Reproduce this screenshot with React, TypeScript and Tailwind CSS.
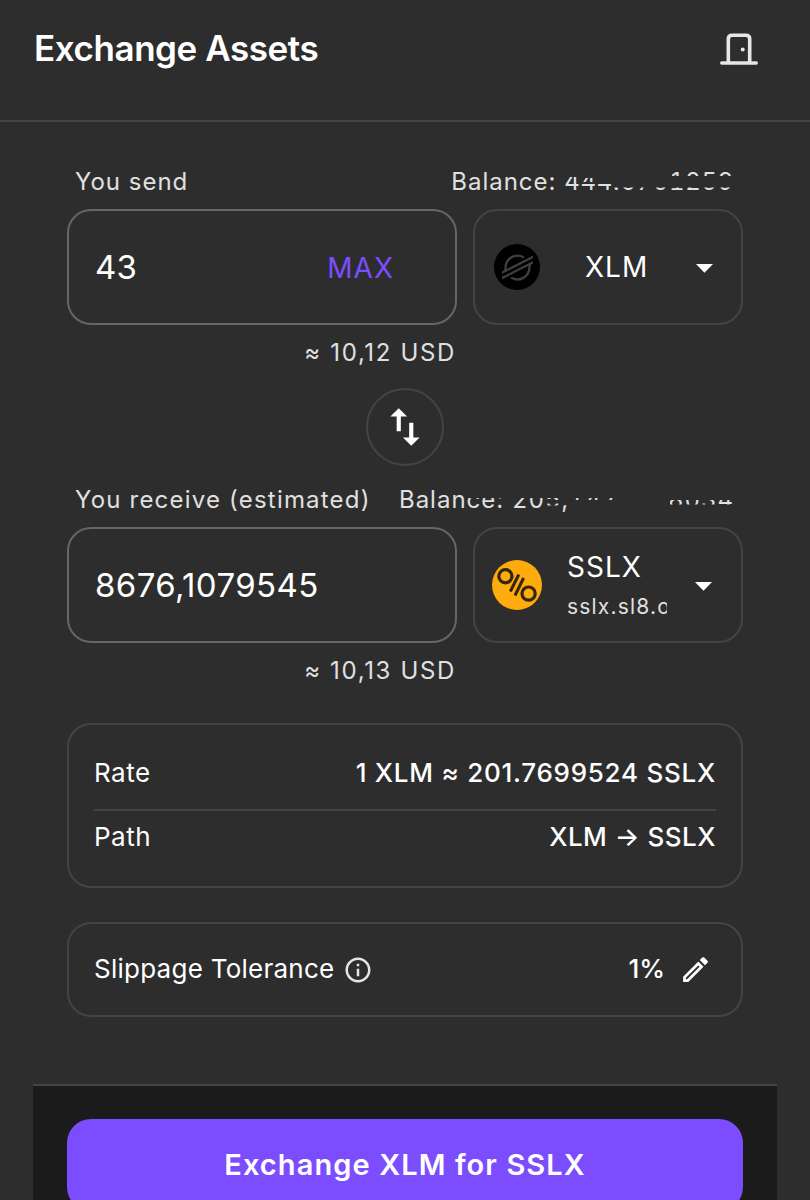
import type { ReactNode } from 'react';
import { MdArrowDropDown, MdImportExport, MdOutlineEdit, MdOutlineInfo } from 'react-icons/md';
import { SiStellar } from 'react-icons/si';

function DoorIcon() {
  return (
    <svg width="40" height="36" viewBox="0 0 40 36" fill="none" stroke="#e6e6e6" strokeWidth="3.6">
      <path d="M9.3 31V7Q9.3 3.3 13 3.3H27Q30.7 3.3 30.7 7V31" />
      <path d="M2.8 31H37.2" strokeLinecap="round" />
      <circle cx="23.7" cy="17.4" r="2" fill="#e6e6e6" stroke="none" />
    </svg>
  );
}

function PercentLogo() {
  return (
    <svg width="50" height="50" viewBox="0 0 50 50" fill="none" stroke="#33280f">
      <circle cx="25" cy="25" r="25" fill="#fdab0d" stroke="none" />
      <circle cx="13.4" cy="16.3" r="6.6" strokeWidth="3.2" />
      <circle cx="36.6" cy="33.6" r="6.6" strokeWidth="3.2" />
      <path d="M26.8 14.5L18.3 31.5M31.6 18L23 35.5" strokeWidth="3" />
    </svg>
  );
}

function Card({ className, children }: { className: string; children: ReactNode }) {
  return <div className={`rounded-[24px] border-2 border-[#444444] ${className}`}>{children}</div>;
}

export default function App() {
  return (
    <div className="flex h-[1200px] w-[810px] flex-col overflow-hidden whitespace-nowrap bg-[#2d2d2d] font-['Inter',sans-serif] text-white">
      <header className="flex h-[122px] shrink-0 items-start justify-between border-b-2 border-[#444444] pr-[51px] pl-[34px]">
        <h1 className="mt-[27px] text-[35px] leading-[42px] font-semibold tracking-[-0.43px]">Exchange Assets</h1>
        <div className="mt-[32px]"><DoorIcon /></div>
      </header>

      <main className="flex flex-col px-[67px]">
        <div className="mt-[44px] flex h-[32px] justify-between pr-[9px] pl-[8px] text-[24px] leading-[32px] tracking-[1px] text-[#e0e0e0]">
          <span>You send</span>
          <span className="relative">
            Balance: <span className="tracking-[0.7px] tabular-nums">444.6701259</span>
            <svg className="absolute top-px right-0" width="174" height="31" viewBox="0 0 174 31" fill="#2d2d2d">
              <path d="M0 0H22V10H0ZM22 0H38V11H22ZM22 15H38V17H22ZM38 0H55V17H38ZM55 0H112V20.5H55ZM112 9H174V20.5H112Z" />
            </svg>
          </span>
        </div>
        <div className="mt-[11px] flex gap-[16px]">
          <div className="flex h-[116px] w-[390px] items-center justify-between rounded-[24px] border-2 border-[#666666] pt-[2px] pr-[61px] pl-[26px]">
            <span className="text-[33px] tracking-[0.3px]">43</span>
            <span className="text-[28px] tracking-[1px] text-[#7c4dff]">MAX</span>
          </div>
          <Card className="flex h-[116px] w-[270px] items-center pl-[19px]">
            <span className="flex size-[46px] items-center justify-center rounded-full bg-black">
              <SiStellar size={31} className="text-[#3d3d3d]" />
            </span>
            <span className="ml-[45px] w-[99px] text-[28px] tracking-[1px]">XLM</span>
            <MdArrowDropDown size={41} />
          </Card>
        </div>
        <div className="mt-[12px] w-[389px] text-right text-[24px] leading-[32px] tracking-[1.65px] text-[#e0e0e0]">≈ 10,12 USD</div>
        <div className="mt-[19px] flex size-[78px] items-center justify-center self-center rounded-full border-2 border-[#444444]">
          <MdImportExport size={50} />
        </div>
        <div className="mt-[18px] flex h-[32px] justify-between pr-[9px] pl-[8px] text-[24px] leading-[32px] tracking-[1.2px] text-[#e0e0e0]">
          <span>You receive (estimated)</span>
          <span className="relative tracking-[1px]">
            Balance: <span className="tracking-[0.95px] tabular-nums">205,1471718034</span>
            <svg className="absolute top-0 right-0" width="270" height="32" viewBox="0 0 270 32" fill="#2d2d2d">
              <path d="M4 0H206V14H4ZM82 16H98V19.5H82ZM82 21.5H97V26H82ZM104 16H206V32H104ZM150 12H206V18H150ZM206 0H270V16H206ZM206 20.5H270V32H206Z" />
            </svg>
          </span>
        </div>
        <div className="mt-[11px] flex gap-[16px]">
          <div className="flex h-[116px] w-[390px] items-center rounded-[24px] border-2 border-[#666666] pt-[2px] pl-[26px]">
            <span className="text-[33px] tracking-[0.4px]">8676,1079545</span>
          </div>
          <Card className="flex h-[116px] w-[270px] items-center pl-[17px]">
            <PercentLogo />
            <span className="ml-[25px] flex w-[100px] flex-col overflow-hidden pt-[2px]">
              <span className="text-[28px] leading-[40px] tracking-[1px]">SSLX</span>
              <span className="text-[21px] leading-[39px] tracking-[1.2px] text-[#e0e0e0]">sslx.sl8.o</span>
            </span>
            <MdArrowDropDown size={41} className="ml-[16px]" />
          </Card>
        </div>
        <div className="mt-[12px] w-[389px] text-right text-[24px] leading-[32px] tracking-[1.65px] text-[#e0e0e0]">≈ 10,13 USD</div>

        <Card className="mt-[36px] flex h-[165px] flex-col px-[25px] pt-[16px] text-[26px] leading-[64px]">
          <div className="flex h-[70px] justify-between border-b-2 border-[#444444]">
            <span className="tracking-[0.5px]">Rate</span>
            <span className="font-medium tracking-[0.75px]">1 XLM ≈ 201.7699524 SSLX</span>
          </div>
          <div className="flex h-[56px] justify-between leading-[52px]">
            <span className="tracking-[0.5px]">Path</span>
            <span className="font-medium tracking-[0.5px]">XLM → SSLX</span>
          </div>
        </Card>

        <Card className="mt-[34px] flex h-[95px] items-center pr-[29px] pl-[25px] text-[26px] leading-[38px]">
          <span className="pb-px tracking-[0.25px]">Slippage Tolerance</span>
          <MdOutlineInfo size={30} className="ml-[9px] text-[#e6e6e6]" />
          <span className="ml-auto pb-px font-medium">1%</span>
          <MdOutlineEdit size={33} className="ml-[14px]" />
        </Card>
      </main>

      <footer className="mx-[33px] mt-[67px] h-[116px] shrink-0 border-t-2 border-[#444444] bg-[#1b1b1b] px-[34px] pt-[33px]">
        <button className="block h-[92px] w-full rounded-[24px] bg-[#7c4dff] text-[29px] font-semibold tracking-[1.1px]">Exchange XLM for SSLX</button>
      </footer>
    </div>
  );
}
